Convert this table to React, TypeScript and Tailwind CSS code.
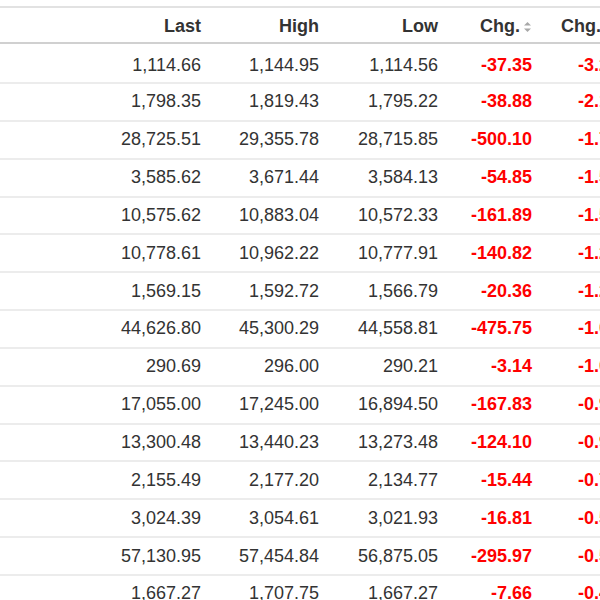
const rows: [string, string, string, string, string][] = [
  ['1,114.66', '1,144.95', '1,114.56', '-37.35', '-3.24%'],
  ['1,798.35', '1,819.43', '1,795.22', '-38.88', '-2.12%'],
  ['28,725.51', '29,355.78', '28,715.85', '-500.10', '-1.71%'],
  ['3,585.62', '3,671.44', '3,584.13', '-54.85', '-1.51%'],
  ['10,575.62', '10,883.04', '10,572.33', '-161.89', '-1.51%'],
  ['10,778.61', '10,962.22', '10,777.91', '-140.82', '-1.29%'],
  ['1,569.15', '1,592.72', '1,566.79', '-20.36', '-1.28%'],
  ['44,626.80', '45,300.29', '44,558.81', '-475.75', '-1.05%'],
  ['290.69', '296.00', '290.21', '-3.14', '-1.07%'],
  ['17,055.00', '17,245.00', '16,894.50', '-167.83', '-0.97%'],
  ['13,300.48', '13,440.23', '13,273.48', '-124.10', '-0.92%'],
  ['2,155.49', '2,177.20', '2,134.77', '-15.44', '-0.71%'],
  ['3,024.39', '3,054.61', '3,021.93', '-16.81', '-0.55%'],
  ['57,130.95', '57,454.84', '56,875.05', '-295.97', '-0.52%'],
  ['1,667.27', '1,707.75', '1,667.27', '-7.66', '-0.46%'],
]

function SortIcon() {
  return (
    <svg width="9" height="12" viewBox="0 0 9 12" className="ml-[3px] shrink-0">
      <path d="M4.5 1 L8 4.5 L1 4.5 Z" fill="#a8a8a8" />
      <path d="M4.5 11 L8 7.5 L1 7.5 Z" fill="#a8a8a8" />
    </svg>
  )
}

const grid = 'grid grid-cols-[82px_119px_118px_119px_94px_120px]'

export default function App() {
  return (
    <div className="w-[600px] h-[600px] overflow-hidden bg-white pt-[6px] font-['Liberation_Sans',Arial,sans-serif] text-[18px] text-[#333]">
      <div className="w-[700px]">
        <div className={`${grid} h-[38px] pt-[3px] items-center border-t-2 border-b-2 border-t-[#e2e2e2] border-b-[#d0d0d0] font-bold`}>
          <div />
          <div className="text-right">Last</div>
          <div className="text-right">High</div>
          <div className="text-right">Low</div>
          <div className="flex items-center justify-end">
            Chg.
            <SortIcon />
          </div>
          <div className="flex items-center pl-[29px]">
            Chg. %
            <SortIcon />
          </div>
        </div>
        {rows.map((r, i) => (
          <div
            key={i}
            className={`${grid} ${i === 0 ? 'h-[40px] pt-[5px]' : 'h-[37.85px]'} items-center border-b-2 border-[#ececec]`}
          >
            <div />
            <div className="text-right">{r[0]}</div>
            <div className="text-right">{r[1]}</div>
            <div className="text-right">{r[2]}</div>
            <div className="text-right font-bold text-[#f00]">{r[3]}</div>
            <div className="pl-[46px] font-bold text-[#f00]">{r[4]}</div>
          </div>
        ))}
      </div>
    </div>
  )
}
